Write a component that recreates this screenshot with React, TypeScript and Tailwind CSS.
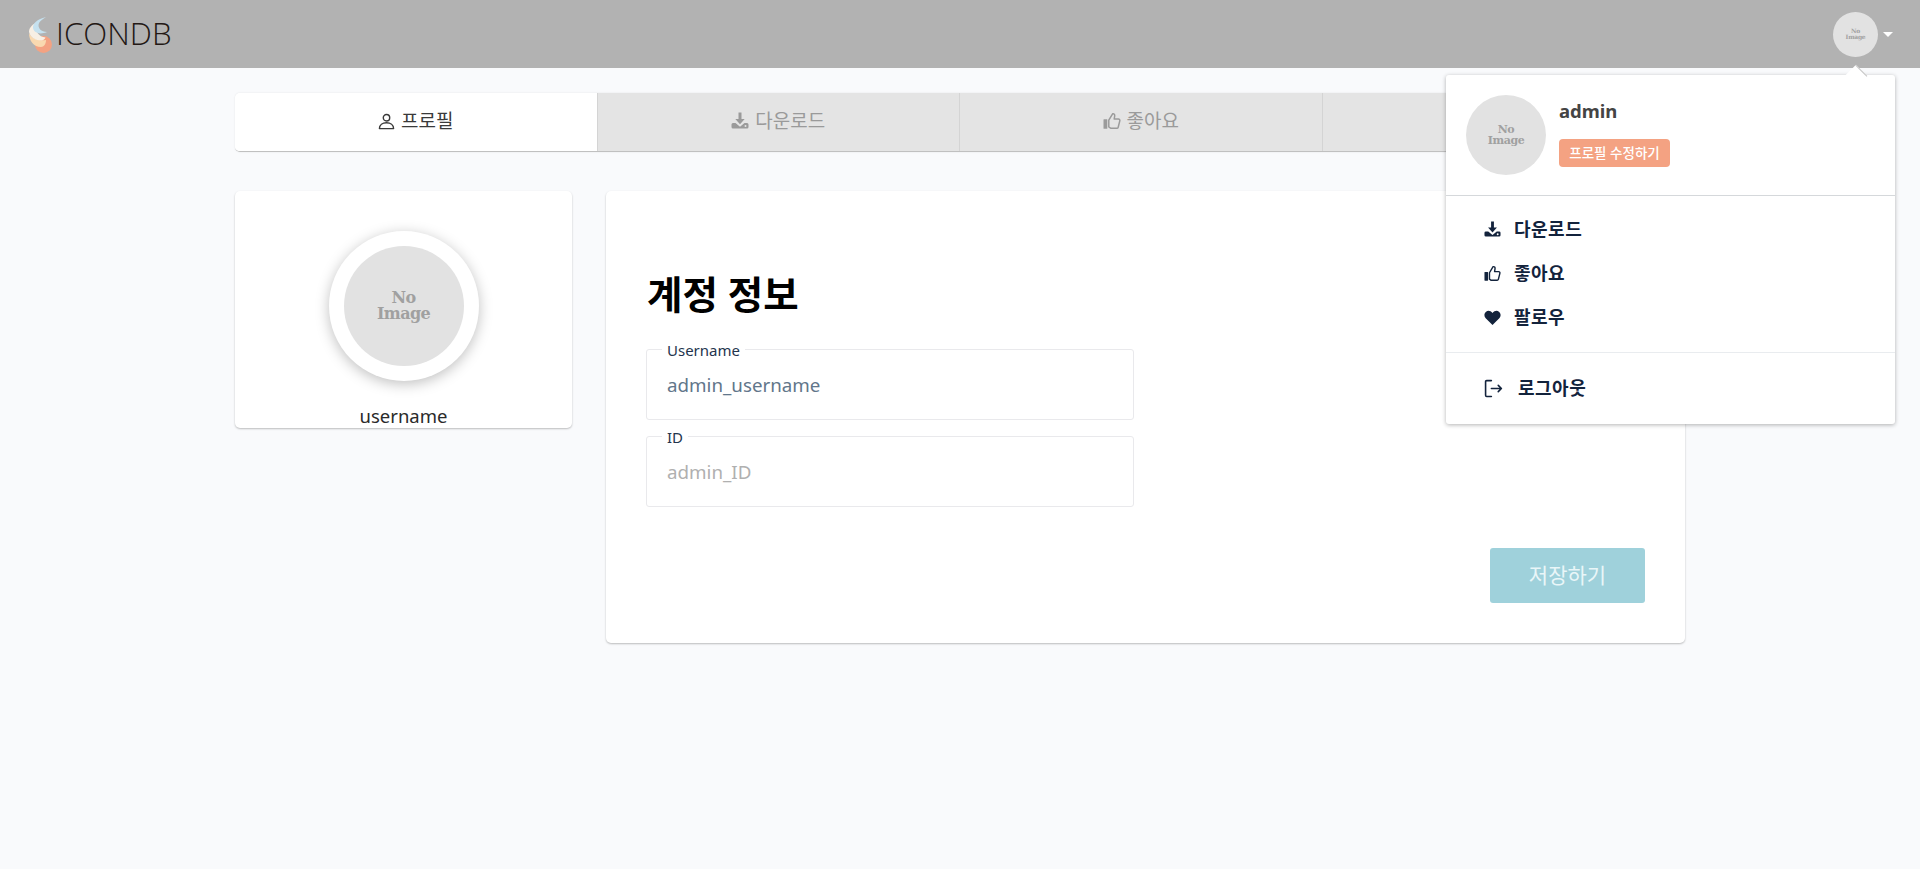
import React from "react";

const KR = "font-['Noto_Sans','Noto_Sans_CJK_KR',sans-serif]";

function DownloadIcon({ className }: { className?: string }) {
  return (
    <svg viewBox="0 0 18 18" className={className} fill="currentColor" fillRule="evenodd">
      <path d="M7.5.5h3v6.500h3.200L9 12.200 4.300 7h3.200z" />
      <path d="M2 11h2.500L9 14.800 13.500 11H16a1.500 1.500 0 0 1 1.500 1.500V15a1.500 1.500 0 0 1-1.500 1.500H2A1.500 1.500 0 0 1 .5 15v-2.500A1.500 1.500 0 0 1 2 11zM14.500 13a1 1 0 1 0 0 2 1 1 0 0 0 0-2z" />
    </svg>
  );
}
function ThumbIcon({ className }: { className?: string }) {
  return (
    <svg viewBox="0 0 18 18" className={className}>
      <rect x="0.500" y="7.300" width="3.800" height="9.400" fill="currentColor" rx=".5" />
      <path d="M5.800 8.200 9.600 1.800c1.500-.3 2.300.7 2.100 2l-.5 3.200h4.200c1.100 0 1.700.9 1.400 1.900l-1.600 6.300c-.2.700-.7 1-1.300 1H7.600L5.800 15z" fill="none" stroke="currentColor" strokeWidth="1.500" strokeLinejoin="round" />
    </svg>
  );
}
function HeartIcon({ className }: { className?: string }) {
  return (
    <svg viewBox="0 0 18 18" className={className} fill="currentColor">
      <path d="M9 17 1.800 9.800C-.2 7.700 0 4.400 2.200 2.800 4.300 1.300 7 1.800 9 4.300c2-2.500 4.700-3 6.800-1.500 2.200 1.600 2.400 4.900.4 7z" />
    </svg>
  );
}
function UserIcon({ className }: { className?: string }) {
  return (
    <svg viewBox="0 0 18 18" className={className} fill="none" stroke="currentColor" strokeWidth="1.500">
      <circle cx="9" cy="5" r="3.400" />
      <path d="M1.500 16.500c0-4 3.300-6.200 7.500-6.200s7.500 2.200 7.500 6.200z" strokeLinejoin="round" />
    </svg>
  );
}
function LogoutIcon({ className }: { className?: string }) {
  return (
    <svg viewBox="0 0 18 18" className={className} fill="none" stroke="currentColor" strokeWidth="1.500" strokeLinecap="round" strokeLinejoin="round">
      <path d="M7 1.500H2.500a1 1 0 0 0-1 1v13a1 1 0 0 0 1 1H7" />
      <path d="M7 9h9.500M13.500 6l3 3-3 3" />
    </svg>
  );
}
function Logo() {
  return (
    <svg viewBox="0 0 24 37" className="h-[37px] w-[24px] shrink-0">
      <circle cx="14.500" cy="28.500" r="8.500" fill="#f4a282" />
      <path d="M0 17C0 25 5 31 12 31 15 31 17 28 17 24 10 25 3 23 0 17z" fill="#f9d9b0" />
      <path d="M7 7C2 9 0 13 0 16 1 21 7 24.500 12 24.500 14.500 24.500 16 23 16.500 21.500 10 21 5 15 7 7z" fill="#f7efe4" />
      <path d="M17 1C8 3 3.500 8 4 12 5 17 11 19 18 16 12.500 16 8 12 10 7 11 5 14 3 17 1z" fill="#c5e1ef" />
    </svg>
  );
}
function NoImage({ size, text, border }: { size: string; text: string; border?: string }) {
  return (
    <div className={`${size} ${border ?? ""} flex shrink-0 items-center justify-center rounded-full bg-[#e2e2e2]`}>
      <span className={`${text} text-center font-bold text-[#a0a0a0] font-['DejaVu_Serif',serif] tracking-[-0.04em]`}>
        No
        <br />
        Image
      </span>
    </div>
  );
}
function Tab({ active, icon, label }: { active?: boolean; icon: React.ReactNode; label: string }) {
  return (
    <div
      className={`flex items-center justify-center gap-[6px] border-r border-[#d4d4d4] pb-[2px] text-[19px] last:border-r-0 ${
        active ? "bg-white text-[#3a3a3a]" : "bg-[#e4e4e4] text-[#9a9a9a]"
      }`}
    >
      {icon}
      <span>{label}</span>
    </div>
  );
}
function Field({ label, value, muted }: { label: string; value: string; muted?: boolean }) {
  return (
    <div className="relative flex h-[71px] w-[488px] items-center rounded-[3px] border border-[#e9e9ec] pl-[20px] pt-[2px]">
      <span className="absolute left-[15px] top-[-9px] bg-white px-[5px] text-[15px] leading-[18px] text-[#24344d]">{label}</span>
      <span className={`text-[18.75px] ${muted ? "text-[#b0b0b0]" : "text-[#62768a]"}`}>{value}</span>
    </div>
  );
}
function MenuItem({ icon, label, gap }: { icon: React.ReactNode; label: string; gap: string }) {
  return (
    <div className={`flex h-[44px] items-center pl-[38px] text-[18px] font-bold tracking-[0.5px] text-[#13233c] ${gap}`}>
      {icon}
      <span>{label}</span>
    </div>
  );
}

export default function App() {
  return (
    <div className={`relative min-h-[869px] bg-[#f9fafc] ${KR}`}>
      <header className="flex h-[68px] items-center justify-between bg-[#b2b2b2] pl-[29px] pr-[27px]">
        <div className="flex items-center gap-[3px]">
          <Logo />
          <span className="font-['Open_Sans',sans-serif] text-[31.300px] font-light leading-none text-[#231815]">ICONDB</span>
        </div>
        <div className="flex items-center gap-[5px]">
          <NoImage size="h-[45px] w-[45px]" text="text-[6px] leading-[6px]" />
          <span className="h-0 w-0 border-x-[5px] border-t-[5px] border-x-transparent border-t-white" />
        </div>
      </header>

      <main className="ml-[235px] w-[1450px] pt-[25px]">
        <nav className="grid h-[59px] grid-cols-4 overflow-hidden rounded-[5px] border-b border-[#c0c0c0] shadow-[0_0_2px_rgba(0,0,0,0.1)]">
          <Tab active icon={<UserIcon className="h-[17px] w-[17px]" />} label="프로필" />
          <Tab icon={<DownloadIcon className="h-[18px] w-[18px]" />} label="다운로드" />
          <Tab icon={<ThumbIcon className="h-[18px] w-[18px]" />} label="좋아요" />
          <Tab icon={<HeartIcon className="h-[18px] w-[18px]" />} label="팔로우" />
        </nav>

        <div className="mt-[39px] flex items-start gap-[34px]">
          <section className="flex h-[237px] w-[337px] shrink-0 flex-col items-center rounded-[5px] bg-white pt-[40px] shadow-[0_1px_2px_rgba(0,0,0,0.25)]">
            <div className="rounded-full bg-white p-[15px] shadow-[0_3px_14px_rgba(0,0,0,0.25)]">
              <NoImage size="h-[120px] w-[120px]" text="text-[16px] leading-[16px]" />
            </div>
            <span className="mt-[23px] text-[18.500px] leading-[24px] text-[#2a2a2a]">username</span>
          </section>

          <section className="h-[452px] flex-1 rounded-[5px] bg-white px-[40px] pt-[78px] shadow-[0_1px_2px_rgba(0,0,0,0.25)]">
            <h1 className="pl-[1px] text-[38.500px] font-bold leading-[50px] text-black">계정 정보</h1>
            <div className="mt-[30px] flex flex-col gap-[16px]">
              <Field label="Username" value="admin_username" />
              <Field label="ID" value="admin_ID" muted />
            </div>
            <div className="mt-[41px] flex justify-end">
              <button className="h-[55px] w-[155px] rounded-[3px] bg-[#9fd1db] text-[21px] text-[#e9f6f8]">저장하기</button>
            </div>
          </section>
        </div>
      </main>

      <div className="absolute left-[1446px] top-[75px] w-[449px] rounded-[3px] bg-white shadow-[0_1px_4px_rgba(0,0,0,0.3)]">
        <div className="absolute right-[31px] top-[-7px] h-[16px] w-[16px] rotate-45 border-t border-[#c4c4c4] bg-white" />
        <div className="relative flex h-[121px] gap-[13px] border-b border-[#d5d8db] pl-[20px] pt-[20px]">
          <NoImage size="h-[80px] w-[80px]" text="text-[11px] leading-[11px]" />
          <div className="flex flex-col items-start">
            <span className="mt-[2px] text-[18.500px] font-bold leading-[28px] text-[#444]">admin</span>
            <span className="mt-[14px] flex h-[28px] w-[111px] items-center justify-center rounded-[4px] bg-[#f4a282] text-[13.500px] font-medium text-white">프로필 수정하기</span>
          </div>
        </div>
        <div className="border-b border-[#e9ecef] pb-[13px] pt-[11px]">
          <MenuItem gap="gap-[13px]" icon={<DownloadIcon className="h-[17px] w-[17px]" />} label="다운로드" />
          <MenuItem gap="gap-[13px]" icon={<ThumbIcon className="h-[17px] w-[17px]" />} label="좋아요" />
          <MenuItem gap="gap-[13px]" icon={<HeartIcon className="h-[17px] w-[17px]" />} label="팔로우" />
        </div>
        <div className="pb-[14px] pt-[13px]">
          <MenuItem gap="gap-[15px]" icon={<LogoutIcon className="h-[19px] w-[19px]" />} label="로그아웃" />
        </div>
      </div>
    </div>
  );
}
